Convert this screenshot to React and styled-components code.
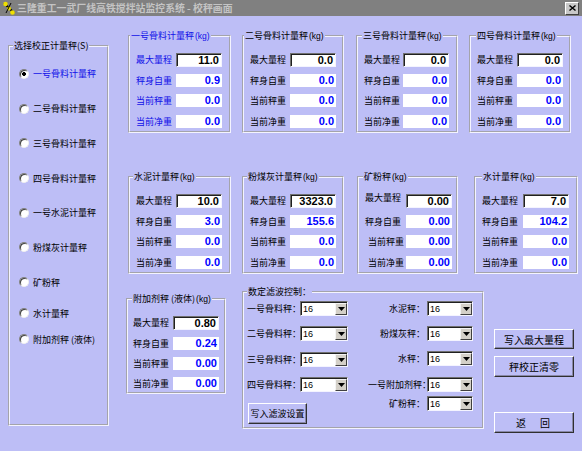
import styled, { createGlobalStyle } from 'styled-components';

const GlobalStyle = createGlobalStyle`
  html, body {
    margin: 0;
    padding: 0;
    height: 100%;
    overflow: hidden;
  }

  body {
    background: #bdbef6;
    font-family: "Noto Sans CJK SC", "Liberation Sans", sans-serif;
    font-size: 9px;
    color: #000;
  }
`;

const Window = styled.div`
  width: 582px;
  height: 451px;
  background: #bdbef6;
  display: flex;
  flex-direction: column;
`;

const TitleBar = styled.div`
  height: 16px;
  flex-shrink: 0;
  box-sizing: border-box;
  background: #808080;
  display: flex;
  align-items: center;
  padding: 0 3px 0 2px;
`;

const TitleText = styled.span`
  flex: 1;
  margin-left: 1px;
  font-size: 9.9px;
  font-weight: 700;
  line-height: 16px;
  color: #c4c4c4;
  white-space: nowrap;
`;

const CloseButton = styled.div`
  width: 14px;
  height: 13px;
  box-sizing: border-box;
  background: #c8c8c8;
  border: 1px solid;
  border-color: #fff #404040 #404040 #fff;
  display: flex;
  align-items: center;
  justify-content: center;
`;

const Body = styled.div`
  display: flex;
  align-items: flex-start;
  padding-left: 8px;
`;

const Group = styled.fieldset`
  margin: 0;
  padding: 0;
  min-width: 0;
  box-sizing: border-box;
  border: 2px groove #f4f4ff;
  width: ${(p) => p.$w}px;
  height: ${(p) => p.$h}px;
  margin-left: ${(p) => p.$ml || 0}px;
  margin-top: ${(p) => p.$mt || 0}px;
  flex-shrink: 0;
`;

const Legend = styled.legend`
  padding: 0 1px;
  margin-left: ${(p) => p.$ml || 0}px;
  font-size: 9px;
  line-height: 12px;
  white-space: nowrap;
  color: ${(p) => (p.$blue ? '#1010e8' : '#000')};
`;

const Unit = styled.span`
  font-family: "Liberation Sans", sans-serif;
  font-size: 8.5px;
  margin-left: 1px;
`;

const RadioList = styled.div`
  display: flex;
  flex-direction: column;
  padding: 4.6px 0 0 9px;
`;

const RadioRow = styled.div`
  height: ${(p) => p.$h}px;
  display: flex;
  align-items: center;
  gap: 4px;
  color: ${(p) => (p.$on ? '#1010e8' : '#000')};
  white-space: nowrap;
`;

const RadioDot = styled.span`
  width: 10px;
  height: 10px;
  flex-shrink: 0;
  box-sizing: border-box;
  border-radius: 50%;
  border: 1px solid;
  border-color: #808080 #f0f0f0 #f0f0f0 #808080;
  box-shadow: inset 1px 1px 0 #404040;
  background: ${(p) =>
    p.$on ? 'radial-gradient(circle, #000 0 1.6px, #fff 2.2px)' : '#fff'};
`;

const Main = styled.div`
  margin-left: 17px;
  margin-top: 14px;
  display: flex;
  flex-direction: column;
`;

const GroupRow = styled.div`
  display: flex;
  align-items: flex-start;
  padding-left: ${(p) => p.$pl || 0}px;
  margin-top: ${(p) => p.$mt || 0}px;
`;

const Fields = styled.div`
  padding: 7.7px ${(p) => p.$pr}px 0 ${(p) => p.$pl}px;
`;

const Field = styled.div`
  height: ${(p) => p.$h || 20.5}px;
  display: grid;
  grid-template-columns: 1fr 46px;
  align-items: center;
`;

const FieldLabel = styled.span`
  white-space: nowrap;
  align-self: ${(p) => (p.$top ? 'start' : 'center')};
  padding-left: ${(p) => p.$indent || 0}px;
  color: ${(p) => (p.$blue ? '#1010e8' : '#000')};
`;

const ValueBox = styled.div`
  height: ${(p) => (p.$edit ? 14 : 13)}px;
  box-sizing: border-box;
  background: #fff;
  text-align: right;
  padding-right: 2px;
  font-family: "Liberation Sans", sans-serif;
  font-weight: 700;
  font-size: 11px;
  line-height: ${(p) => (p.$edit ? 12 : 13)}px;
  color: ${(p) => (p.$edit ? '#000' : '#0000ff')};
  border: ${(p) => (p.$edit ? '1px solid' : 'none')};
  border-color: #707070 #f4f4ff #f4f4ff #707070;
  box-shadow: ${(p) => (p.$edit ? 'inset 1px 1px 0 #202020' : 'none')};
`;

const FilterColumns = styled.div`
  display: flex;
  justify-content: space-between;
  padding: 2px 9px 0 3px;
`;

const FilterColumn = styled.div`
  display: flex;
  flex-direction: column;
  align-items: flex-start;
`;

const FilterRow = styled.div`
  height: 16px;
  margin-top: ${(p) => p.$mt || 0}px;
  display: flex;
  align-items: center;
  gap: 2px;
`;

const FilterLabel = styled.span`
  width: ${(p) => p.$w}px;
  text-align: ${(p) => (p.$right ? 'right' : 'left')};
  white-space: nowrap;
`;

const Combo = styled.div`
  width: ${(p) => p.$w}px;
  height: 15px;
  box-sizing: border-box;
  background: #fff;
  display: flex;
  border: 1px solid;
  border-color: #707070 #f4f4ff #f4f4ff #707070;
  box-shadow: inset 1px 1px 0 #202020;
  padding: 1px 0 0 1px;
`;

const ComboText = styled.span`
  flex: 1;
  padding-left: 1px;
  font-family: "Liberation Sans", sans-serif;
  font-size: 9px;
  line-height: 12px;
`;

const ComboArrow = styled.span`
  width: 12px;
  box-sizing: border-box;
  background: #d4d0c8;
  border: 1px solid;
  border-color: #f4f4f4 #404040 #404040 #f4f4f4;
  display: flex;
  align-items: center;
  justify-content: center;
`;

const Button = styled.button`
  width: ${(p) => p.$w}px;
  height: ${(p) => p.$h}px;
  margin-top: ${(p) => p.$mt || 0}px;
  margin-left: ${(p) => p.$ml || 0}px;
  padding: 0;
  box-sizing: border-box;
  background: #bdbef6;
  border: 1px solid;
  border-color: #fff #303030 #303030 #fff;
  box-shadow: inset -1px -1px 0 #8888a8;
  font-family: "Noto Sans CJK SC", sans-serif;
  font-size: ${(p) => p.$fs || 10}px;
  letter-spacing: ${(p) => p.$ls || 0}px;
  color: #000;
  white-space: pre;
`;

const ButtonColumn = styled.div`
  display: flex;
  flex-direction: column;
  margin-left: 10px;
`;

const scaleRows = [
  {
    mt: 0,
    groups: [
      { title: '一号骨料计量秤', w: 103, ml: 0, lm: 0, pr: 7, blue: true, values: ['11.0', '0.9', '0.0', '0.0'] },
      { title: '二号骨料计量秤', w: 102, ml: 11, lm: 0, pr: 6, values: ['0.0', '0.0', '0.0', '0.0'] },
      { title: '三号骨料计量秤', w: 102, ml: 12, lm: 4, pr: 7, values: ['0.0', '0.0', '0.0', '0.0'] },
      { title: '四号骨料计量秤', w: 102, ml: 11, lm: 5, pr: 6, values: ['0.0', '0.0', '0.0', '0.0'] },
    ],
  },
  {
    mt: 38,
    groups: [
      { title: '水泥计量秤', w: 103, ml: 0, lm: 3, pr: 7, values: ['10.0', '3.0', '0.0', '0.0'] },
      { title: '粉煤灰计量秤', w: 102, ml: 11, lm: 3, pr: 6, values: ['3323.0', '155.6', '0.0', '0.0'] },
      { title: '矿粉秤', w: 101, ml: 13, lm: 4, pr: 4, odd: true, values: ['0.00', '0.00', '0.00', '0.00'] },
      { title: '水计量秤', w: 104, ml: 16, lm: 6, pr: 7, values: ['7.0', '104.2', '0.0', '0.0'] },
    ],
  },
];

const fieldNames = ['最大量程', '秤身自重', '当前秤重', '当前净重'];

const radios = [
  ['一号骨料计量秤', 34.7],
  ['二号骨料计量秤', 34.7],
  ['三号骨料计量秤', 34.7],
  ['四号骨料计量秤', 34.7],
  ['一号水泥计量秤', 34.7],
  ['粉煤灰计量秤', 34.7],
  ['矿粉秤', 34.7],
  ['水计量秤', 27.3],
  ['附加剂秤 (液体)', 24.7],
];

const leftFilters = ['一号骨料秤：', '二号骨料秤：', '三号骨料秤：', '四号骨料秤：'];
const rightFilters = [
  ['水泥秤：', 0],
  ['粉煤灰秤：', 9],
  ['水秤：', 9],
  ['一号附加剂秤：', 10],
  ['矿粉秤：', 3],
];

function AppIcon() {
  return (
    <svg width="14" height="14" viewBox="0 0 14 14">
      <path d="M2 2 L12 12" stroke="#000" strokeWidth="2" />
      <circle cx="3.5" cy="3" r="2.3" fill="#f0e000" />
      <circle cx="7" cy="7.5" r="2" fill="#f0e000" />
      <circle cx="10.5" cy="11.5" r="2.3" fill="#f0e000" />
      <path d="M9 2 L4 12" stroke="#000" strokeWidth="1" />
    </svg>
  );
}

function ArrowDown() {
  return (
    <svg width="7" height="4" viewBox="0 0 7 4">
      <path d="M0 0 H7 L3.5 4 Z" fill="#000" />
    </svg>
  );
}

function ScaleGroup({ g, h = 103 }) {
  return (
    <Group $w={g.w} $h={h} $ml={g.ml}>
      <Legend $ml={g.lm} $blue={g.blue}>
        {g.title}
        <Unit>(kg)</Unit>
      </Legend>
      <Fields $pl={6} $pr={g.pr}>
        {fieldNames.map((name, i) => (
          <Field key={name}>
            <FieldLabel $blue={g.blue} $top={g.odd && i === 0} $indent={g.odd && i > 1 ? 3 : 0}>
              {name}
            </FieldLabel>
            <ValueBox $edit={i === 0}>{g.values[i]}</ValueBox>
          </Field>
        ))}
      </Fields>
    </Group>
  );
}

function ComboBox({ w }) {
  return (
    <Combo $w={w}>
      <ComboText>16</ComboText>
      <ComboArrow>
        <ArrowDown />
      </ComboArrow>
    </Combo>
  );
}

export default function App() {
  return (
    <>
      <GlobalStyle />
      <Window>
        <TitleBar>
          <AppIcon />
          <TitleText>三隆重工一武厂线高铁搅拌站监控系统 - 校秤画面</TitleText>
          <CloseButton>
            <svg width="7" height="6" viewBox="0 0 7 6">
              <path d="M0.5 0.5 L6.5 5.5 M6.5 0.5 L0.5 5.5" stroke="#000" strokeWidth="1.4" />
            </svg>
          </CloseButton>
        </TitleBar>
        <Body>
          <Group $w={101} $h={386} $mt={24}>
            <Legend $ml={3}>选择校正计量秤(S)</Legend>
            <RadioList>
              {radios.map(([label, h], i) => (
                <RadioRow key={label} $h={h} $on={i === 0}>
                  <RadioDot $on={i === 0} />
                  {label}
                </RadioRow>
              ))}
            </RadioList>
          </Group>
          <Main>
            {scaleRows.map((row, r) => (
              <GroupRow key={r} $pl={2} $mt={row.mt}>
                {row.groups.map((g) => (
                  <ScaleGroup key={g.title} g={g} />
                ))}
              </GroupRow>
            ))}
            <GroupRow $mt={12}>
              <Group $w={100} $h={101} $mt={7}>
                <Legend $ml={4}>
                  附加剂秤 (液体)
                  <Unit>(kg)</Unit>
                </Legend>
                <Fields $pl={5} $pr={5}>
                  {fieldNames.map((name, i) => (
                    <Field key={name} $h={20.3}>
                      <FieldLabel>{name}</FieldLabel>
                      <ValueBox $edit={i === 0}>{['0.80', '0.24', '0.00', '0.00'][i]}</ValueBox>
                    </Field>
                  ))}
                </Fields>
              </Group>
              <Group $w={242} $h={143} $ml={16}>
                <Legend $ml={3}>数定滤波控制：</Legend>
                <FilterColumns>
                  <FilterColumn>
                    {leftFilters.map((label, i) => (
                      <FilterRow key={label} $mt={i === 0 ? 0 : 9.67}>
                        <FilterLabel $w={51}>{label}</FilterLabel>
                        <ComboBox w={48} />
                      </FilterRow>
                    ))}
                    <Button $w={59} $h={21} $mt={10} $ml={1} $fs={9}>
                      写入滤波设置
                    </Button>
                  </FilterColumn>
                  <FilterColumn>
                    {rightFilters.map(([label, mt]) => (
                      <FilterRow key={label} $mt={mt}>
                        <FilterLabel $w={57} $right>
                          {label}
                        </FilterLabel>
                        <ComboBox w={46} />
                      </FilterRow>
                    ))}
                  </FilterColumn>
                </FilterColumns>
              </Group>
              <ButtonColumn>
                <Button $w={80} $h={20} $mt={43}>
                  写入最大量程
                </Button>
                <Button $w={80} $h={21} $mt={7}>
                  秤校正清零
                </Button>
                <Button $w={80} $h={21} $mt={35} $ls={2}>
                  返　回
                </Button>
              </ButtonColumn>
            </GroupRow>
          </Main>
        </Body>
      </Window>
    </>
  );
}
